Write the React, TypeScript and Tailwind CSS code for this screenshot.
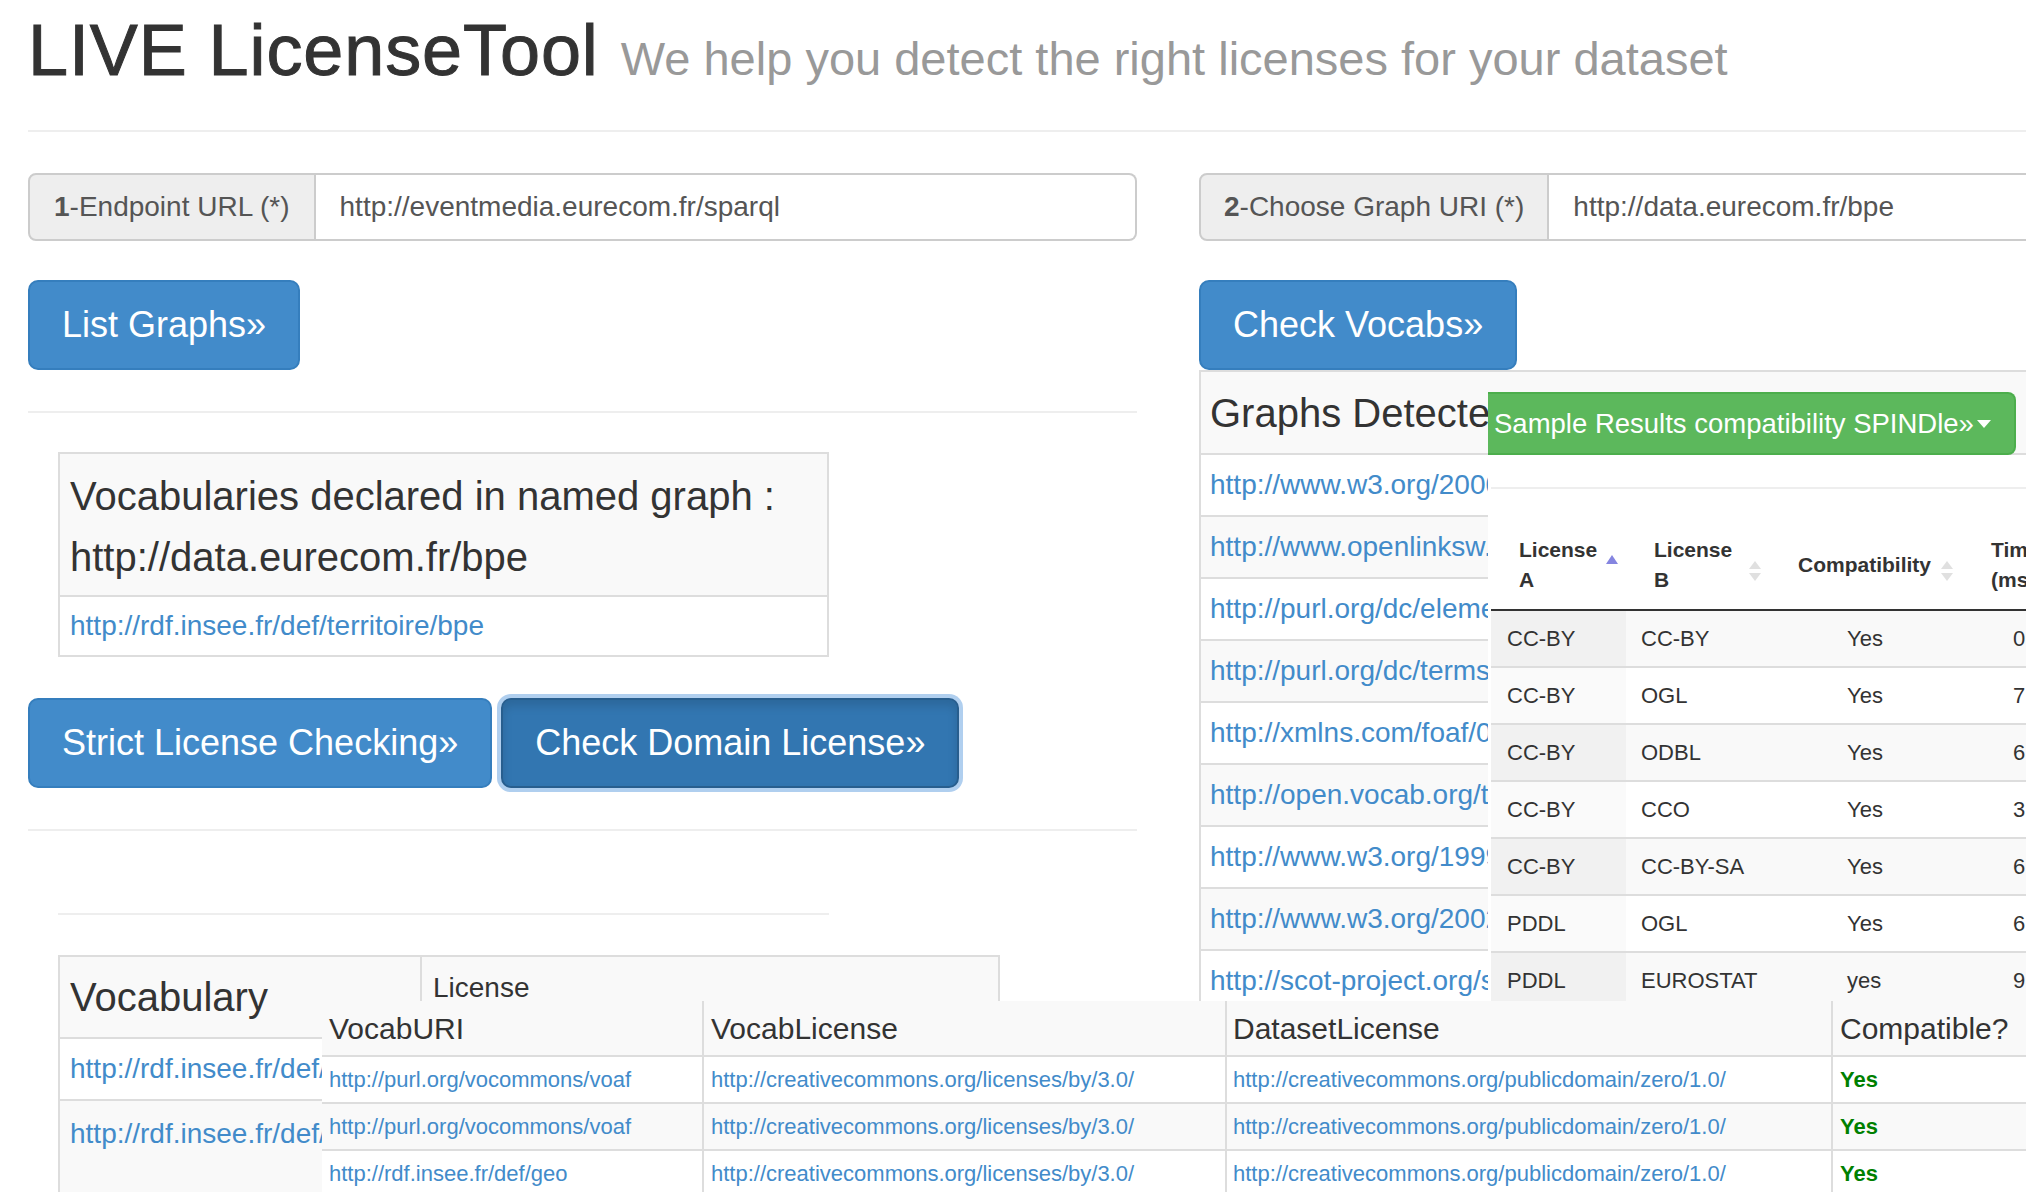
import React from "react";

const graphs = [
  "http://www.w3.org/2000/01/rdf-schema#",
  "http://www.openlinksw.com/schemas/virtrdf#",
  "http://purl.org/dc/elements/1.1/",
  "http://purl.org/dc/terms/",
  "http://xmlns.com/foaf/0.1/",
  "http://open.vocab.org/terms/",
  "http://www.w3.org/1999/02/22-rdf-syntax-ns#",
  "http://www.w3.org/2002/07/owl#",
  "http://scot-project.org/scot/ns#",
];

const spindle = [
  ["CC-BY", "CC-BY", "Yes", "0"],
  ["CC-BY", "OGL", "Yes", "7"],
  ["CC-BY", "ODBL", "Yes", "6"],
  ["CC-BY", "CCO", "Yes", "3"],
  ["CC-BY", "CC-BY-SA", "Yes", "6"],
  ["PDDL", "OGL", "Yes", "6"],
  ["PDDL", "EUROSTAT", "yes", "9"],
];

const vocabRows = [
  [
    "http://purl.org/vocommons/voaf",
    "http://creativecommons.org/licenses/by/3.0/",
    "http://creativecommons.org/publicdomain/zero/1.0/",
  ],
  [
    "http://purl.org/vocommons/voaf",
    "http://creativecommons.org/licenses/by/3.0/",
    "http://creativecommons.org/publicdomain/zero/1.0/",
  ],
  [
    "http://rdf.insee.fr/def/geo",
    "http://creativecommons.org/licenses/by/3.0/",
    "http://creativecommons.org/publicdomain/zero/1.0/",
  ],
];

function InputGroup({ num, label, value, labelPad }: { num: string; label: string; value: string; labelPad: string }) {
  return (
    <div className="flex h-[68px]">
      <span
        className={`flex items-center ${labelPad} bg-[#eee] border-2 border-[#ccc] rounded-l-[8px] text-[28px] text-[#555] whitespace-nowrap`}
      >
        <b className="font-bold">{num}</b>
        {label}
      </span>
      <div className="flex-1 flex items-center px-[24px] bg-white border-2 border-l-0 border-[#ccc] rounded-r-[8px] text-[28px] text-[#555] whitespace-nowrap">
        {value}
      </div>
    </div>
  );
}

function Btn({ children, active }: { children: React.ReactNode; active?: boolean }) {
  return (
    <button
      className={
        active
          ? "h-[90px] px-[32px] bg-[#3276b1] border-2 border-[#285e8e] rounded-[10px] text-white text-[36px] leading-[48px] whitespace-nowrap shadow-[0_0_0_4px_#b0cfef,inset_0_6px_10px_rgba(0,0,0,0.125)]"
          : "h-[90px] px-[32px] bg-[#428bca] border-2 border-[#357ebd] rounded-[10px] text-white text-[36px] leading-[48px] whitespace-nowrap"
      }
    >
      {children}
    </button>
  );
}

function SortAsc() {
  return (
    <svg width="12" height="9" viewBox="0 0 12 9">
      <polygon points="6,0 12,9 0,9" fill="#8585e0" />
    </svg>
  );
}

function SortBoth() {
  return (
    <svg width="12" height="21" viewBox="0 0 12 21">
      <polygon points="6,0 12,8 0,8" fill="#e0e0e0" />
      <polygon points="0,12 12,12 6,20" fill="#e0e0e0" />
    </svg>
  );
}

export default function App() {
  return (
    <div className="relative w-[2026px] h-[1192px] overflow-hidden bg-white text-[#333] font-['Liberation_Sans',Arial,sans-serif]">
      <div className="w-[2400px] pl-[28px]">
        {/* Page header */}
        <div className="w-[2300px] pt-[11px] pb-[40px] border-b-2 border-[#eee]">
          <h1 className="h-[79px] text-[72px] leading-[79px] whitespace-nowrap">
            <span className="tracking-[0.9px] [-webkit-text-stroke:1px_#333]">LIVE LicenseTool</span>{" "}
            <small className="ml-[2px] text-[47px] leading-none text-[#999]">
              We help you detect the right licenses for your dataset
            </small>
          </h1>
        </div>

        <div className="flex gap-[62px] mt-[41px]">
          {/* Left column */}
          <div className="w-[1109px] shrink-0">
            <InputGroup num="1" label="-Endpoint URL (*)" value="http://eventmedia.eurecom.fr/sparql" labelPad="px-[24px]" />
            <div className="mt-[39px]">
              <Btn>List Graphs»</Btn>
            </div>
            <div className="mt-[41px] h-[2px] bg-[#eee]" />

            <div className="mt-[39px] ml-[30px] w-[771px] border-2 border-[#ddd]">
              <div className="bg-[#f9f9f9] pl-[10px] pt-[12px] pb-[7px] text-[40px] leading-[61px] border-b-2 border-[#ddd]">
                Vocabularies declared in named graph :<br />
                http://data.eurecom.fr/bpe
              </div>
              <div className="h-[58px] flex items-center pl-[10px] bg-white text-[28px] text-[#428bca]">
                http://rdf.insee.fr/def/territoire/bpe
              </div>
            </div>

            <div className="mt-[41px] flex gap-[9px]">
              <Btn>Strict License Checking»</Btn>
              <Btn active>Check Domain License»</Btn>
            </div>

            <div className="mt-[41px] h-[2px] bg-[#eee]" />
            <div className="mt-[82px] ml-[30px] w-[771px] h-[2px] bg-[#eee]" />

            <div className="mt-[40px] ml-[30px] w-[942px] border-2 border-b-0 border-[#ddd]">
              <div className="flex h-[82px] bg-[#f9f9f9] border-b-2 border-[#ddd]">
                <div className="w-[362px] border-r-2 border-[#ddd] flex items-center pl-[10px] text-[40px]">Vocabulary</div>
                <div className="flex-1 pl-[11px] pt-[11px] text-[28px] leading-[40px]">License</div>
              </div>
              <div className="flex h-[62px] bg-white border-b-2 border-[#ddd]">
                <div className="w-[362px] border-r-2 border-[#ddd] flex items-center pl-[10px] text-[28px] text-[#428bca] whitespace-nowrap">
                  <span className="block w-[252px] overflow-hidden">http://rdf.insee.fr/def/geo</span>
                </div>
                <div className="flex-1" />
              </div>
              <div className="flex h-[120px] bg-[#f9f9f9]">
                <div className="w-[362px] border-r-2 border-[#ddd] pl-[10px] pt-[12px] text-[28px] text-[#428bca] whitespace-nowrap">
                  <span className="block w-[252px] overflow-hidden">http://rdf.insee.fr/def/territoire/bpe</span>
                </div>
                <div className="flex-1" />
              </div>
            </div>
          </div>

          {/* Right column */}
          <div className="w-[1109px] shrink-0">
            <InputGroup num="2" label="-Choose Graph URI (*)" value="http://data.eurecom.fr/bpe" labelPad="px-[23px]" />
            <div className="mt-[39px]">
              <Btn>Check Vocabs»</Btn>
            </div>
            <div className="border-2 border-[#ddd]">
              <div className="h-[81px] bg-[#f9f9f9] flex items-center pl-[9px] text-[40px] whitespace-nowrap">
                <span className="block w-[278px] overflow-hidden">Graphs Detected</span>
              </div>
              {graphs.map((g, i) => (
                <div
                  key={i}
                  className={`h-[62px] border-t-2 border-[#ddd] flex items-center pl-[9px] text-[28px] text-[#428bca] whitespace-nowrap ${
                    i % 2 === 0 ? "bg-white" : "bg-[#f9f9f9]"
                  }`}
                >
                  <span className="block w-[278px] overflow-hidden">{g}</span>
                </div>
              ))}
            </div>
          </div>
        </div>
      </div>

      {/* SPINDle overlay */}
      <div className="absolute left-[1488px] top-[392px] w-[640px] z-10">
        <div className="w-[528px] h-[63px] bg-[#5cb85c] border-2 border-l-0 border-[#4cae4c] rounded-r-[8px] flex items-center pl-[6px] text-white text-[27.5px] whitespace-nowrap">
          Sample Results compatibility SPINDle»
          <span className="inline-block ml-[3px] w-0 h-0 border-l-[7px] border-r-[7px] border-t-[8px] border-l-transparent border-r-transparent border-t-white" />
        </div>
        <div className="bg-white h-[560px] pl-[3px]">
          <div className="pt-[32px]">
            <div className="h-[2px] bg-[#eee]" />
          </div>
          <div className="mt-[22px]">
            <div className="flex h-[100px] border-b-2 border-[#333] text-[21px] leading-[30px] font-bold">
              <div className="relative w-[135px] flex items-center pl-[28px] pt-[10px]">
                <span>
                  License
                  <br />A
                </span>
                <span className="absolute left-[115px] top-[44px]">
                  <SortAsc />
                </span>
              </div>
              <div className="relative w-[150px] flex items-center pl-[28px] pt-[10px]">
                <span>
                  License
                  <br />B
                </span>
                <span className="absolute left-[123px] top-[50px]">
                  <SortBoth />
                </span>
              </div>
              <div className="relative w-[203px] flex items-center pl-[22px] pt-[10px]">
                <span>Compatibility</span>
                <span className="absolute left-[165px] top-[50px]">
                  <SortBoth />
                </span>
              </div>
              <div className="w-[120px] flex items-center pl-[12px] pt-[10px] whitespace-nowrap">
                <span>
                  Time
                  <br />
                  (ms)
                </span>
              </div>
            </div>
            {spindle.map((r, i) => {
              const odd = i % 2 === 0;
              return (
                <div
                  key={i}
                  className={`flex h-[57px] border-b-2 border-[#ddd] text-[22px] ${odd ? "bg-[#f9f9f9]" : "bg-white"}`}
                >
                  <div className={`w-[135px] flex items-center pl-[16px] ${odd ? "bg-[#f1f1f1]" : "bg-[#fafafa]"}`}>{r[0]}</div>
                  <div className="w-[150px] flex items-center pl-[15px]">{r[1]}</div>
                  <div className="w-[203px] flex items-center pl-[71px]">{r[2]}</div>
                  <div className="w-[120px] flex items-center pl-[34px]">{r[3]}</div>
                </div>
              );
            })}
          </div>
        </div>
      </div>

      {/* Nested vocab/license table overlay */}
      <div className="absolute left-[322px] top-[1001px] w-[1820px] z-20">
        <div className="flex h-[56px] bg-[#f9f9f9] border-b-2 border-[#ddd] text-[30px] whitespace-nowrap">
          <div className="w-[380px] flex items-center pl-[7px]">VocabURI</div>
          <div className="w-[523px] flex items-center pl-[7px] border-l-2 border-[#ddd]">VocabLicense</div>
          <div className="w-[606px] flex items-center pl-[6px] border-l-2 border-[#ddd]">DatasetLicense</div>
          <div className="w-[300px] flex items-center pl-[7px] border-l-2 border-[#ddd]">Compatible?</div>
        </div>
        {vocabRows.map((r, i) => (
          <div
            key={i}
            className={`flex h-[47px] border-b-2 border-[#ddd] text-[22px] whitespace-nowrap ${i % 2 === 0 ? "bg-white" : "bg-[#f9f9f9]"}`}
          >
            <div className="w-[380px] flex items-center pl-[7px] text-[#428bca]">{r[0]}</div>
            <div className="w-[523px] flex items-center pl-[7px] border-l-2 border-[#ddd] text-[#428bca]">{r[1]}</div>
            <div className="w-[606px] flex items-center pl-[6px] border-l-2 border-[#ddd] text-[#428bca]">{r[2]}</div>
            <div className="w-[300px] flex items-center pl-[7px] border-l-2 border-[#ddd] font-bold text-[#008000]">Yes</div>
          </div>
        ))}
      </div>
    </div>
  );
}
